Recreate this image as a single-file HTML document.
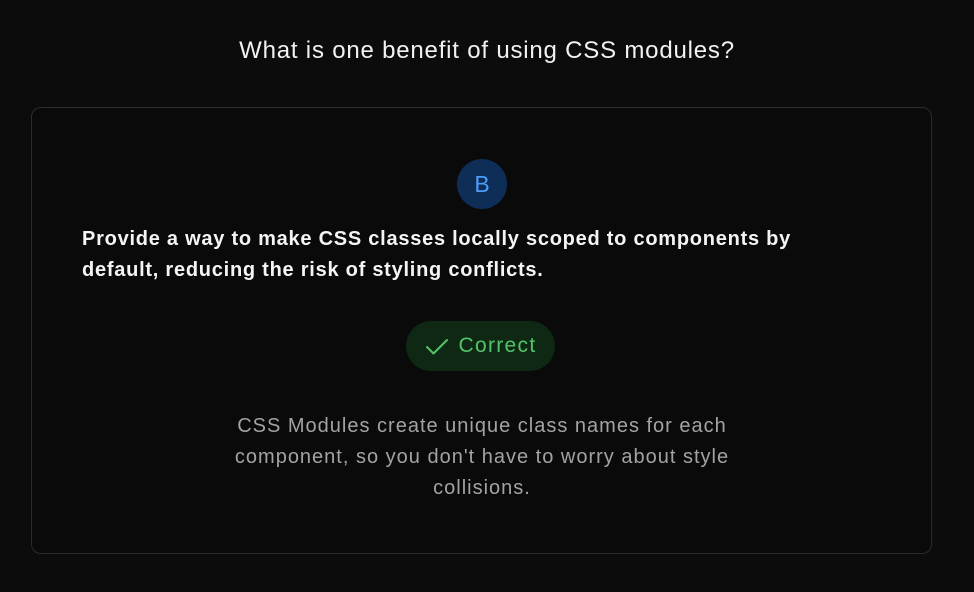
<!DOCTYPE html>
<html><head><meta charset="utf-8"><style>
html,body{margin:0;padding:0;background:#0c0c0c;width:974px;height:592px;overflow:hidden;font-family:"Liberation Sans",sans-serif}
h1{position:absolute;top:37px;left:0;width:974px;text-align:center;margin:0;font-weight:normal;color:#f2f2f2;font-size:24px;letter-spacing:0.8px}
.card{position:absolute;left:31px;top:107px;width:899px;height:445px;border:1px solid #2c2c2c;border-radius:10px;background:#0a0a0a}
.circle{position:absolute;left:425px;top:51px;width:50px;height:50px;border-radius:50%;background:#0f2e57;color:#4b9dfa;font-size:23px;text-align:center;line-height:50px}
.q{position:absolute;left:50px;top:116px;width:740px;color:#f4f4f4;font-weight:bold;font-size:20px;line-height:31px;letter-spacing:0.75px}
.badge{position:absolute;left:374px;top:213px;width:149px;height:50px;border-radius:25px;background:#0e2814;color:#52c46a;font-size:21px;line-height:50px;text-align:center;letter-spacing:1.3px}
.badge svg{vertical-align:-4px;margin-right:10px}
.exp{position:absolute;left:170px;top:303px;width:560px;text-align:center;color:#a3a3a3;font-size:20px;line-height:31px;letter-spacing:1px}
</style></head><body>
<h1>What is one benefit of using CSS modules?</h1>
<div class="card">
<div class="circle">B</div>
<div class="q">Provide a way to make CSS classes locally scoped to components by default, reducing the risk of styling conflicts.</div>
<div class="badge"><svg width="24" height="18" viewBox="0 0 24 18"><path d="M2 9l6.5 6.5L22 2" fill="none" stroke="#52c46a" stroke-width="2" stroke-linecap="round" stroke-linejoin="round"/></svg>Correct</div>
<div class="exp">CSS Modules create unique class names for each component, so you don't have to worry about style collisions.</div>
</div>
</body></html>
